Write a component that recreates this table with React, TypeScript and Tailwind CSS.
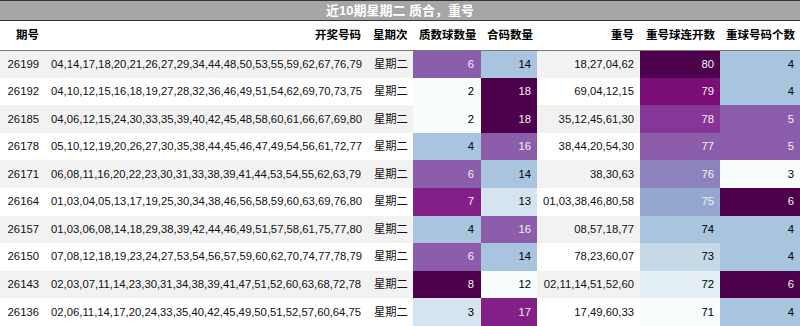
import React from 'react';

type Row = {
  issue: string;
  numbers: string;
  weekday: string;
  prime: number;
  composite: number;
  repeats: string;
  streak: number;
  repeatCount: number;
};

const rows: Row[] = [
  { issue: '26199', numbers: '04,14,17,18,20,21,26,27,29,34,44,48,50,53,55,59,62,67,76,79', weekday: '星期二', prime: 6, composite: 14, repeats: '18,27,04,62', streak: 80, repeatCount: 4 },
  { issue: '26192', numbers: '04,10,12,15,16,18,19,27,28,32,36,46,49,51,54,62,69,70,73,75', weekday: '星期二', prime: 2, composite: 18, repeats: '69,04,12,15', streak: 79, repeatCount: 4 },
  { issue: '26185', numbers: '04,06,12,15,24,30,33,35,39,40,42,45,48,58,60,61,66,67,69,80', weekday: '星期二', prime: 2, composite: 18, repeats: '35,12,45,61,30', streak: 78, repeatCount: 5 },
  { issue: '26178', numbers: '05,10,12,19,20,26,27,30,35,38,44,45,46,47,49,54,56,61,72,77', weekday: '星期二', prime: 4, composite: 16, repeats: '38,44,20,54,30', streak: 77, repeatCount: 5 },
  { issue: '26171', numbers: '06,08,11,16,20,22,23,30,31,33,38,39,41,44,53,54,55,62,63,79', weekday: '星期二', prime: 6, composite: 14, repeats: '38,30,63', streak: 76, repeatCount: 3 },
  { issue: '26164', numbers: '01,03,04,05,13,17,19,25,30,34,38,46,56,58,59,60,63,69,76,80', weekday: '星期二', prime: 7, composite: 13, repeats: '01,03,38,46,80,58', streak: 75, repeatCount: 6 },
  { issue: '26157', numbers: '01,03,06,08,14,18,29,38,39,42,44,46,49,51,57,58,61,75,77,80', weekday: '星期二', prime: 4, composite: 16, repeats: '08,57,18,77', streak: 74, repeatCount: 4 },
  { issue: '26150', numbers: '07,08,12,18,19,23,24,27,53,54,56,57,59,60,62,70,74,77,78,79', weekday: '星期二', prime: 6, composite: 14, repeats: '78,23,60,07', streak: 73, repeatCount: 4 },
  { issue: '26143', numbers: '02,03,07,11,14,23,30,31,34,38,39,41,47,51,52,60,63,68,72,78', weekday: '星期二', prime: 8, composite: 12, repeats: '02,11,14,51,52,60', streak: 72, repeatCount: 6 },
  { issue: '26136', numbers: '02,06,11,14,17,20,24,33,35,40,42,45,49,50,51,52,57,60,64,75', weekday: '星期二', prime: 3, composite: 17, repeats: '17,49,60,33', streak: 71, repeatCount: 4 },
];

// BuPu gradient steps (light -> dark)
const bupu = {
  s0: 'bg-[#f7fcfd] text-black',
  s1: 'bg-[#e3eef5] text-black',
  s17: 'bg-[#d5e4ef] text-black',
  s2: 'bg-[#c6d9e9] text-black',
  s3: 'bg-[#a9c4de] text-black',
  s4: 'bg-[#94a7cf] text-[#f1f1f1]',
  s5: 'bg-[#8c83bd] text-[#f1f1f1]',
  s6: 'bg-[#8b5daa] text-[#f1f1f1]',
  s7: 'bg-[#863696] text-[#f1f1f1]',
  s8: 'bg-[#832087] text-[#f1f1f1]',
  s9: 'bg-[#7b0d77] text-[#f1f1f1]',
  s10: 'bg-[#4d004b] text-[#f1f1f1]',
};

type HeatColumn = 'prime' | 'composite' | 'streak' | 'repeatCount';

const heatMap: Record<HeatColumn, Record<number, string>> = {
  prime: { 2: bupu.s0, 3: bupu.s17, 4: bupu.s3, 6: bupu.s6, 7: bupu.s8, 8: bupu.s10 },
  composite: { 12: bupu.s0, 13: bupu.s17, 14: bupu.s3, 16: bupu.s6, 17: bupu.s8, 18: bupu.s10 },
  streak: {
    71: bupu.s0, 72: bupu.s1, 73: bupu.s2, 74: bupu.s3, 75: bupu.s4,
    76: bupu.s5, 77: bupu.s6, 78: bupu.s7, 79: bupu.s9, 80: bupu.s10,
  },
  repeatCount: { 3: bupu.s0, 4: bupu.s3, 5: bupu.s6, 6: bupu.s10 },
};

function heat(value: number, column: HeatColumn) {
  return heatMap[column][value] || bupu.s0;
}

const headers = ['期号', '开奖号码', '星期次', '质数球数量', '合码数量', '重号', '重号球连开数', '重球号码个数'];
const widths = ['w-[45px]', 'w-[322px]', 'w-[46px]', 'w-[68px]', 'w-[56px]', 'w-[103px]', 'w-[80px]', 'w-[80px]'];

export default function App() {
  return (
    <div className="w-[800px] h-[326px] overflow-hidden bg-white font-['Liberation_Sans','Noto_Sans_CJK_SC',sans-serif]">
      {/* Title bar */}
      <div className="h-[21px] border-y border-[#333] bg-[#a6a6a6] flex items-center justify-center text-[13px] font-bold text-white leading-none">
        近10期星期二 质合，重号
      </div>

      <table className="w-[800px] table-fixed border-collapse">
        <colgroup>
          {widths.map((w, i) => (
            <col key={i} className={w} />
          ))}
        </colgroup>
        <thead>
          <tr className="h-[29px] border-b border-[#777]">
            {headers.map(h => (
              <th key={h} className="px-[6px] text-right text-[11.5px] font-bold text-black whitespace-nowrap">
                {h}
              </th>
            ))}
          </tr>
        </thead>
        <tbody className="text-[11.3px] text-[#111]">
          {rows.map((row, i) => (
            <tr key={row.issue} className={`h-[27.6px] ${i % 2 === 0 ? 'bg-[#f2f2f2]' : 'bg-white'}`}>
              <td className="px-[6px] text-right whitespace-nowrap">{row.issue}</td>
              <td className="px-[6px] text-right whitespace-nowrap">{row.numbers}</td>
              <td className="px-[7px] text-right whitespace-nowrap">{row.weekday}</td>
              <td className={`px-[7px] text-right ${heat(row.prime, 'prime')}`}>{row.prime}</td>
              <td className={`px-[6px] text-right ${heat(row.composite, 'composite')}`}>{row.composite}</td>
              <td className="px-[6px] text-right whitespace-nowrap">{row.repeats}</td>
              <td className={`px-[6px] text-right ${heat(row.streak, 'streak')}`}>{row.streak}</td>
              <td className={`px-[6px] text-right ${heat(row.repeatCount, 'repeatCount')}`}>{row.repeatCount}</td>
            </tr>
          ))}
        </tbody>
      </table>
    </div>
  );
}
